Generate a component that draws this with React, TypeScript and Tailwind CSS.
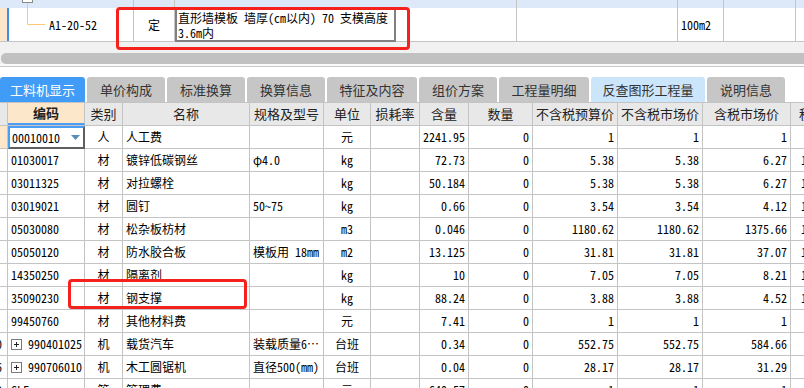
import React from 'react';

const cellFont = "font-['Noto_Sans_Mono_CJK_SC','Noto_Sans_CJK_SC',monospace] text-[12px] text-black";
const uiFont = "font-['Noto_Sans_CJK_SC','Noto_Sans',sans-serif] text-[12px]";

const cols = [
  { w: 'w-[8px]', label: '' },
  { w: 'w-[77px]', label: '编码' },
  { w: 'w-[38px]', label: '类别' },
  { w: 'w-[127px]', label: '名称' },
  { w: 'w-[74px]', label: '规格及型号' },
  { w: 'w-[47px]', label: '单位' },
  { w: 'w-[49px]', label: '损耗率' },
  { w: 'w-[49px]', label: '含量' },
  { w: 'w-[64px]', label: '数量' },
  { w: 'w-[85px]', label: '不含税预算价' },
  { w: 'w-[85px]', label: '不含税市场价' },
  { w: 'w-[88px]', label: '含税市场价' },
  { w: 'w-[60px]', label: '税率' },
];

type Row = {
  n?: string;
  code: string;
  plus?: boolean;
  cat: string;
  name: string;
  spec: string;
  unit: string;
  qty: string;
  p1: string;
  p2: string;
  p3: string;
  tail?: string;
};

const rows: Row[] = [
  { code: '00010010', cat: '人', name: '人工费', spec: '', unit: '元', qty: '2241.95', p1: '1', p2: '1', p3: '1' },
  { code: '01030017', cat: '材', name: '镀锌低碳钢丝', spec: 'φ4.0', unit: 'kg', qty: '72.73', p1: '5.38', p2: '5.38', p3: '6.27', tail: '1' },
  { code: '03011325', cat: '材', name: '对拉螺栓', spec: '', unit: 'kg', qty: '50.184', p1: '5.38', p2: '5.38', p3: '6.27', tail: '1' },
  { code: '03019021', cat: '材', name: '圆钉', spec: '50~75', unit: 'kg', qty: '0.66', p1: '3.54', p2: '3.54', p3: '4.12', tail: '1' },
  { code: '05030080', cat: '材', name: '松杂板枋材', spec: '', unit: 'm3', qty: '0.046', p1: '1180.62', p2: '1180.62', p3: '1375.66', tail: '1' },
  { code: '05050120', cat: '材', name: '防水胶合板', spec: '模板用 18mm', unit: 'm2', qty: '13.125', p1: '31.81', p2: '31.81', p3: '37.07', tail: '1' },
  { code: '14350250', cat: '材', name: '隔离剂', spec: '', unit: 'kg', qty: '10', p1: '7.05', p2: '7.05', p3: '8.21', tail: '1' },
  { code: '35090230', cat: '材', name: '钢支撑', spec: '', unit: 'kg', qty: '88.24', p1: '3.88', p2: '3.88', p3: '4.52', tail: '1' },
  { code: '99450760', cat: '材', name: '其他材料费', spec: '', unit: '元', qty: '7.41', p1: '1', p2: '1', p3: '1' },
  { n: '10', code: '990401025', plus: true, cat: '机', name: '载货汽车', spec: '装载质量6…', unit: '台班', qty: '0.34', p1: '552.75', p2: '552.75', p3: '584.66' },
  { n: '16', code: '990706010', plus: true, cat: '机', name: '木工圆锯机', spec: '直径500(mm)', unit: '台班', qty: '0.04', p1: '28.17', p2: '28.17', p3: '31.29' },
  { n: '12', code: 'GLF', cat: '管', name: '管理费', spec: '', unit: '元', qty: '640.57', p1: '1', p2: '1', p3: '1' },
];

const tabs = [
  { label: '工料机显示', w: 'w-[85px]', tone: 'active' },
  { label: '单价构成', w: 'w-[78px]', tone: 'gray' },
  { label: '标准换算', w: 'w-[78px]', tone: 'gray' },
  { label: '换算信息', w: 'w-[78px]', tone: 'gray' },
  { label: '特征及内容', w: 'w-[90px]', tone: 'gray' },
  { label: '组价方案', w: 'w-[78px]', tone: 'gray' },
  { label: '工程量明细', w: 'w-[90px]', tone: 'gray' },
  { label: '反查图形工程量', w: 'w-[114px]', tone: 'light' },
  { label: '说明信息', w: 'w-[78px]', tone: 'gray' },
];

const PlusBox = () => (
  <svg width="11" height="11" viewBox="0 0 11 11" className="shrink-0">
    <rect x="0.5" y="0.5" width="10" height="10" fill="white" stroke="#7a7a7a" />
    <path d="M3 5.5h5M5.5 3v5" stroke="#222" strokeWidth="1" />
  </svg>
);

const cellBase = 'shrink-0 h-full border-r border-[#c4c4c4] flex items-center overflow-hidden whitespace-nowrap';

const DataRow = ({ row, first }: { row: Row; first: boolean }) => (
  <div className={`flex h-[23px] border-b border-[#c4c4c4] ${cellFont}`}>
    <div className={`${cellBase} w-[8px] justify-end ${first ? 'bg-[#fde7cb]' : 'bg-white'}`}>
      {row.n && <span className="shrink-0 pr-[5px]">{row.n}</span>}
    </div>
    {first ? (
      <div className="shrink-0 w-[77px] h-[calc(100%+1px)] border-2 border-t-[#4a9ff5] border-l-[#4a9ff5] border-r-[#5f5f5f] border-b-[#5f5f5f] flex items-center justify-between pl-[2px] pr-[3px] bg-white">
        <span>{row.code}</span>
        <svg width="9" height="5" viewBox="0 0 9 5"><path d="M0 0h9L4.5 5z" fill="#5b8db8" /></svg>
      </div>
    ) : (
      <div className={`${cellBase} w-[77px] pl-[3px] gap-[6px]`}>
        {row.plus && <PlusBox />}
        <span>{row.code}</span>
      </div>
    )}
    <div className={`${cellBase} w-[38px] justify-center`}>{row.cat}</div>
    <div className={`${cellBase} w-[127px] pl-[3px]`}>{row.name}</div>
    <div className={`${cellBase} w-[74px] pl-[3px]`}>{row.spec}</div>
    <div className={`${cellBase} w-[47px] justify-center`}>{row.unit}</div>
    <div className={`${cellBase} w-[49px]`}></div>
    <div className={`${cellBase} w-[49px] justify-end pr-[3px]`}>{row.qty}</div>
    <div className={`${cellBase} w-[64px] justify-end pr-[3px]`}>0</div>
    <div className={`${cellBase} w-[85px] justify-end pr-[3px]`}>{row.p1}</div>
    <div className={`${cellBase} w-[85px] justify-end pr-[3px]`}>{row.p2}</div>
    <div className={`${cellBase} w-[88px] justify-end pr-[3px]`}>{row.p3}</div>
    <div className={`${cellBase} w-[60px] pl-[10px]`}>{row.tail ?? ''}</div>
  </div>
);

const TopPanel = () => (
  <div className="relative">
    {/* header band of the upper grid */}
    <div className="flex h-[8px] bg-[#dde8f9]">
      <div className="shrink-0 w-[134px] h-full border-r border-[#c4c4c4] relative">
        <div className="absolute left-[22px] -top-[8px] w-[11px] h-[11px] border border-[#8a8a8a] bg-white" />
      </div>
      <div className="shrink-0 w-[41px] h-full border-r border-[#c4c4c4]" />
      <div className="shrink-0 w-[342px] h-full border-r border-[#c4c4c4]" />
      <div className="shrink-0 w-[161px] h-full border-r border-[#c4c4c4]" />
      <div className="shrink-0 w-[46px] h-full border-r border-[#c4c4c4]" />
      <div className="shrink-0 w-[72px] h-full border-r border-[#c4c4c4]" />
      <div className="flex-1" />
    </div>
    {/* current row */}
    <div className={`flex h-[34px] border-b border-[#c4c4c4] bg-white ${cellFont}`}>
      <div className="shrink-0 w-[7px] h-full bg-[#fde7cb]" />
      <div className="shrink-0 w-[2px] h-full bg-[#3d8fe8]" />
      <div className="shrink-0 w-[125px] h-full border-r border-[#c4c4c4] relative flex items-center pl-[40px]">
        <svg className="absolute left-[18px] -top-[5px] overflow-visible" width="20" height="22" viewBox="0 0 20 22">
          <path d="M0.5 0V21.5H18" stroke="#fcc873" strokeWidth="1" fill="none" />
        </svg>
        <span>A1-20-52</span>
      </div>
      <div className="shrink-0 w-[41px] h-full border-r border-[#c4c4c4] flex items-center justify-center">定</div>
      <div className="shrink-0 w-[342px] h-full border-r border-[#c4c4c4] flex">
        <div className="w-[221px] h-[calc(100%+1px)] border-2 border-[#808080] px-[1px] leading-[15px] bg-white">
          <div>直形墙模板 墙厚(cm以内) 70 支模高度</div>
          <div>3.6m内</div>
        </div>
      </div>
      <div className="shrink-0 w-[161px] h-full border-r border-[#c4c4c4]" />
      <div className="shrink-0 w-[46px] h-full border-r border-[#c4c4c4] flex items-center pl-[3px]">100m2</div>
      <div className="shrink-0 w-[72px] h-full border-r border-[#c4c4c4]" />
      <div className="flex-1" />
    </div>
    <div className="h-[11px] bg-[#f1f1f1]" />
    <div className="h-[11px] bg-[#f1f1f1] pl-[1px]">
      <div className="h-full w-full bg-[#c1c1c1] rounded-l-[5px]" />
    </div>
    <div className="h-[2px] bg-[#fafafa]" />
    <div className="h-[1px] bg-[#c8c8c8]" />

    <div className="absolute left-[116px] top-[7px] w-[294px] h-[43px] border-[3px] border-[#f5211c] rounded-[4px]" />
  </div>
);

const Tabs = () => (
  <div className={`flex items-end gap-[2px] h-[30px] bg-white ${uiFont}`}>
    {tabs.map((t) => (
      <div
        key={t.label}
        className={`${t.w} h-[25px] shrink-0 rounded-t-[3px] flex items-center justify-center text-[13px] ${
          t.tone === 'active'
            ? 'bg-[#409cf6] text-white'
            : t.tone === 'light'
            ? 'bg-[#cbe5fb] text-[#333]'
            : 'bg-[#c6c6c6] text-[#333]'
        }`}
      >
        {t.label}
      </div>
    ))}
  </div>
);

const HeaderRow = () => (
  <div className={`flex h-[24px] border-t border-b border-[#c4c4c4] bg-[#e8e8e8] ${uiFont} text-[13px] text-[#222]`}>
    {cols.map((c, i) => {
      if (i === 1) {
        return (
          <div key={i} className={`${c.w} shrink-0 h-full border-r border-[#c4c4c4] border-b-2 border-b-[#4a9ff5] bg-[#fde7cb] flex items-center justify-center font-bold`}>
            {c.label}
          </div>
        );
      }
      if (i === cols.length - 1) {
        return (
          <div key={i} className={`${c.w} shrink-0 h-full flex items-center pl-[8px] overflow-hidden whitespace-nowrap`}>
            {c.label}
          </div>
        );
      }
      return (
        <div key={i} className={`${c.w} shrink-0 h-full border-r border-[#c4c4c4] flex items-center justify-center whitespace-nowrap overflow-hidden`}>
          {c.label}
        </div>
      );
    })}
  </div>
);

export default function App() {
  return (
    <div className="w-[804px] h-[388px] overflow-hidden bg-white relative">
      <TopPanel />
      <div className="h-[5px] bg-white" />
      <Tabs />
      <HeaderRow />
      <div className="relative">
        {rows.map((r, i) => (
          <DataRow key={r.code} row={r} first={i === 0} />
        ))}
        <div className="absolute left-[68px] top-[153px] w-[179px] h-[30px] border-[3px] border-[#f5211c] rounded-[4px]" />
      </div>
    </div>
  );
}
